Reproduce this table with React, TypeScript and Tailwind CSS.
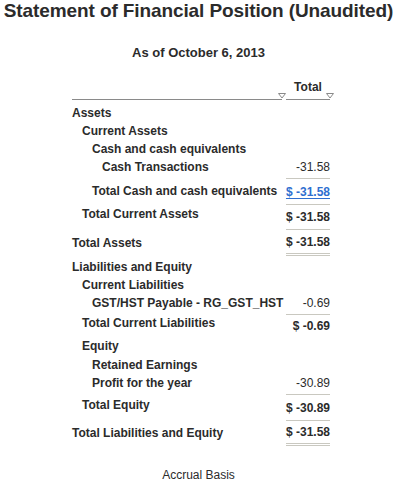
import React from 'react'

const PAD = ['pl-0', 'pl-[10px]', 'pl-[20px]', 'pl-[30px]']

function Caret() {
  return (
    <svg width="8" height="6" viewBox="0 0 8 6" className="absolute right-[-4px] bottom-[0px]">
      <path d="M0.5 0.5 L7.5 0.5 L4 5 Z" fill="white" stroke="#8a8a8a" strokeWidth="1" />
    </svg>
  )
}

export default function App() {
  return (
    <div className="w-[397px] h-[487px] bg-white text-[#2b2b2b] font-['Liberation_Sans',Arial,sans-serif] overflow-hidden">
      <h1 className="text-center text-[19px] font-bold leading-[22px] tracking-[-0.1px]">
        Statement of Financial Position (Unaudited)
      </h1>
      <p className="text-center text-[13px] font-bold leading-[16px] mt-[23px]">As of October 6, 2013</p>

      <div className="ml-[72px] w-[258px] mt-[17px] text-[12px]">
        {/* header */}
        <div className="flex h-[22px]">
          <div className="relative flex-1 border-b border-[#8a8a8a]">
            <Caret />
          </div>
          <div className="relative w-[44px] ml-[4px] border-b border-[#8a8a8a] text-center font-bold leading-[14px] pt-[2px]">
            Total
            <Caret />
          </div>
        </div>

        <Line label="Assets" level={0} mt={4} />
        <Line label="Current Assets" level={1} />
        <Line label="Cash and cash equivalents" level={2} />
        <Line label="Cash Transactions" level={3} amount="-31.58" />
        <Total label="Total Cash and cash equivalents" level={2} amount="$ -31.58" h={26} link mt={2} />
        <Total label="Total Current Assets" level={1} amount="$ -31.58" h={25} lift={3} />
        <Total label="Total Assets" level={0} amount="$ -31.58" h={27} grand />

        <Line label="Liabilities and Equity" level={0} mt={2} />
        <Line label="Current Liabilities" level={1} />
        <Line label="GST/HST Payable - RG_GST_HST" level={2} amount="-0.69" />
        <Total label="Total Current Liabilities" level={1} amount="$ -0.69" h={23} lift={3} mt={2} />
        <Line label="Equity" level={1} />
        <Line label="Retained Earnings" level={2} mt={1} />
        <Line label="Profit for the year" level={2} amount="-30.89" />
        <Total label="Total Equity" level={1} amount="$ -30.89" h={26} lift={2} mt={2} />
        <Total label="Total Liabilities and Equity" level={0} amount="$ -31.58" h={26} grand />
      </div>

      <p className="text-center text-[12px] mt-[22px] leading-[14px]">Accrual Basis</p>
    </div>
  )
}

function Line({ label, level, amount, mt = 0 }: { label: string; level: number; amount?: string; mt?: number }) {
  return (
    <div className="flex h-[18px] items-center" style={{ marginTop: mt }}>
      <div className={`flex-1 font-bold whitespace-nowrap ${PAD[level]}`}>{label}</div>
      <div className="w-[44px] ml-[4px] text-right whitespace-nowrap">{amount}</div>
    </div>
  )
}

function Total({
  label,
  level,
  amount,
  h,
  link,
  grand,
  lift = 0,
  mt = 0,
}: {
  label: string
  level: number
  amount: string
  h: number
  link?: boolean
  grand?: boolean
  lift?: number
  mt?: number
}) {
  return (
    <div className="flex" style={{ height: h, marginTop: mt }}>
      <div className={`flex-1 font-bold whitespace-nowrap flex items-center ${PAD[level]}`} style={{ paddingBottom: lift * 2 }}>
        {label}
      </div>
      <div
        className={`w-[44px] ml-[4px] flex items-center justify-end font-bold whitespace-nowrap border-t border-[#c9c8c0] ${
          grand ? 'border-b-[3px] border-b-[#c9c8c0] border-double' : ''
        }`}
      >
        {link ? <span className="text-[#2f6fd0] underline underline-offset-[2px]">{amount}</span> : amount}
      </div>
    </div>
  )
}
